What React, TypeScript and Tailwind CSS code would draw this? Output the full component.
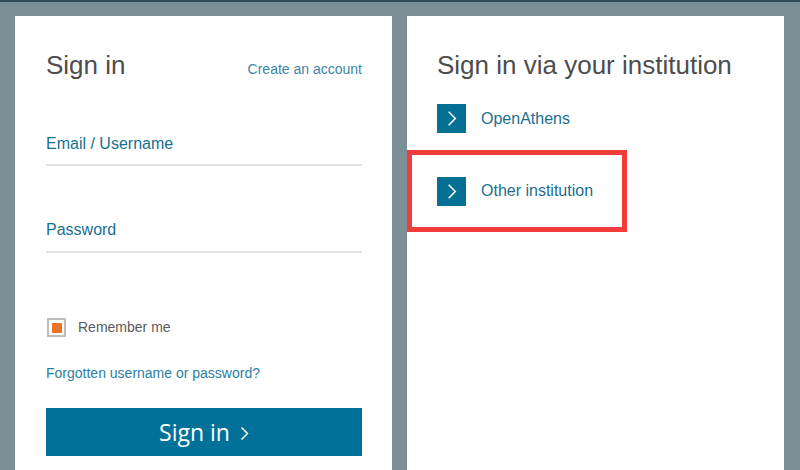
import React from "react";

const Chevron = ({ className, sw = 2 }: { className?: string; sw?: number }) => (
  <svg viewBox="0 0 12 20" className={className} fill="none" stroke="currentColor" strokeWidth={sw}>
    <path d="M2 2l8 8-8 8" />
  </svg>
);

const App = () => {
  const institutions = [
    { id: 1, name: "OpenAthens", marked: false },
    { id: 2, name: "Other institution", marked: true },
  ];

  return (
    <main
      className="w-[800px] h-[470px] overflow-hidden bg-[#7b8f96] border-t-2 border-[#2e4b57] flex gap-[15px] pl-[15px] pt-[14px]"
      style={{ fontFamily: "Arial, 'Liberation Sans', sans-serif" }}
    >
      {/* left: sign in form */}
      <section className="w-[377px] h-full bg-white pl-[31px] pr-[30px] pt-[34px]">
        <div className="flex justify-between items-baseline">
          <h1 className="text-[26px] leading-[30px] text-[#4d4d4d]">Sign in</h1>
          <a className="text-[14px] text-[#3a86a8] cursor-pointer">Create an account</a>
        </div>

        <div className="mt-[54px] border-b-2 border-[#e3e3e3] pb-[11px]">
          <label className="block text-[16px] leading-[19px] text-[#17708f]">Email / Username</label>
        </div>

        <div className="mt-[54px] border-b-2 border-[#e3e3e3] pb-[12px]">
          <label className="block text-[16px] leading-[19px] text-[#17708f]">Password</label>
        </div>

        <div className="mt-[64px] flex items-center gap-[12px]">
          <div className="w-[19px] h-[19px] border-2 border-[#bdbdbd] flex items-center justify-center ml-[1px]">
            <div className="w-[10px] h-[10px] bg-[#ec7423]" />
          </div>
          <span className="text-[14px] text-[#5a5a5a]">Remember me</span>
        </div>

        <a className="block mt-[27px] text-[14px] leading-[17px] text-[#2a7fa3] cursor-pointer">
          Forgotten username or password?
        </a>

        <button
          className="mt-[26px] w-full h-[48px] bg-[#00729a] text-white text-[23px] flex items-center justify-center gap-[10px]"
          style={{ fontFamily: "'Open Sans', 'Noto Sans', sans-serif" }}
        >
          Sign in
          <Chevron className="w-[9px] h-[15px] mt-[3px]" />
        </button>
      </section>

      {/* right: institutional login */}
      <section className="w-[377px] h-full bg-white pt-[34px]">
        <h1 className="pl-[30px] text-[26px] leading-[30px] text-[#4d4d4d]">Sign in via your institution</h1>
        <div className="mt-[24px] flex flex-col">
          {institutions.map((el) => (
            <div
              key={el.id}
              className={
                el.marked
                  ? "w-[220px] h-[82px] -mt-[3px] border-[5px] border-[#f23b3b] flex items-center gap-[15px] pl-[25px]"
                  : "h-[29px] flex items-center gap-[15px] pl-[30px] mb-[20px]"
              }
            >
              <div className="w-[29px] h-[29px] bg-[#056f94] flex items-center justify-center text-white">
                <Chevron className="w-[10px] h-[17px]" sw={1.8} />
              </div>
              <span className="text-[16px] text-[#1b6f8e]">{el.name}</span>
            </div>
          ))}
        </div>
      </section>
    </main>
  );
};

export default App;
